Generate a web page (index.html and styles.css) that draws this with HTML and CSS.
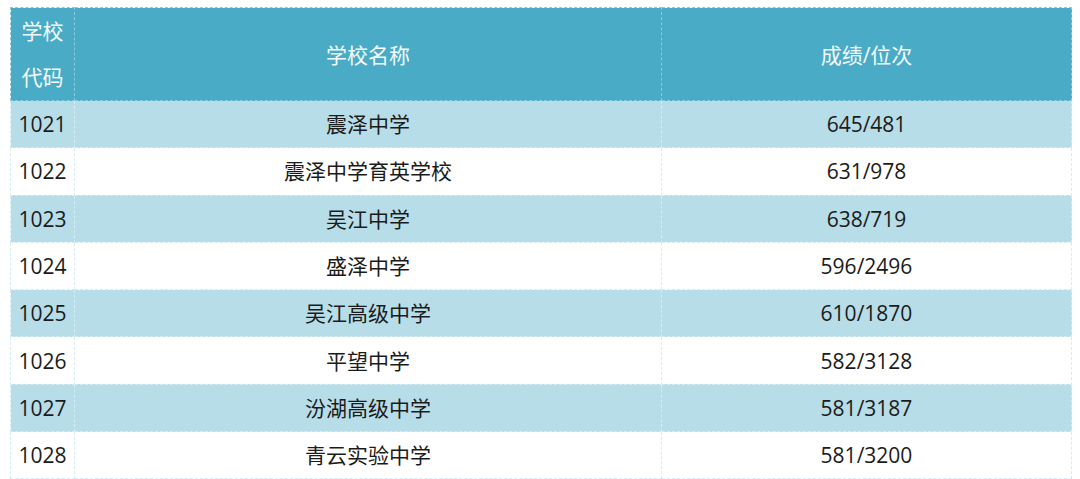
FILE: index.html
```html
<!DOCTYPE html>
<html lang="zh">
<head>
<meta charset="utf-8">
<link rel="stylesheet" href="styles.css">
</head>
<body>
<table class="grid">
  <colgroup><col class="c1"><col class="c2"><col class="c3"></colgroup>
  <thead>
    <tr><th class="code-h">学校<br>代码</th><th>学校名称</th><th>成绩/位次</th></tr>
  </thead>
  <tbody>
    <tr class="odd"><td>1021</td><td>震泽中学</td><td>645/481</td></tr>
    <tr><td>1022</td><td>震泽中学育英学校</td><td>631/978</td></tr>
    <tr class="odd"><td>1023</td><td>吴江中学</td><td>638/719</td></tr>
    <tr><td>1024</td><td>盛泽中学</td><td>596/2496</td></tr>
    <tr class="odd"><td>1025</td><td>吴江高级中学</td><td>610/1870</td></tr>
    <tr><td>1026</td><td>平望中学</td><td>582/3128</td></tr>
    <tr class="odd"><td>1027</td><td>汾湖高级中学</td><td>581/3187</td></tr>
    <tr><td>1028</td><td>青云实验中学</td><td>581/3200</td></tr>
  </tbody>
</table>
</body>
</html>
```
FILE: styles.css
```css
html, body { margin: 0; padding: 0; background: #fff; }
body { padding: 7px 9px 0 10px; font-family: "Open Sans", "Noto Sans CJK SC", sans-serif; }
.grid {
  width: 1061px;
  border-collapse: collapse;
  table-layout: fixed;
  font-size: 21px;
  color: #1b1b1b;
}
.c1 { width: 64px; }
.c2 { width: 587px; }
.c3 { width: 410px; }
.grid th, .grid td {
  border: 1px dashed #d6ecf3;
  text-align: center;
  padding: 0;
  font-weight: normal;
}
.grid thead th {
  background: #4aabc6;
  color: #f4fbfd;
  height: 90px;
  line-height: 46px;
  padding-top: 2px;
  border-color: #8cc9dc;
}
.grid thead th.code-h { padding-top: 0; line-height: 46px; }
.grid td { height: 46.3px; line-height: 46px; }
.grid tr.odd td { background: #b7dde8; }
```
